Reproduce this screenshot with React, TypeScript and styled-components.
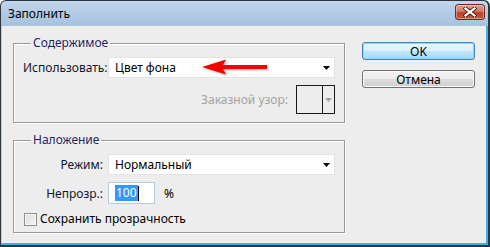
import styled, { createGlobalStyle } from "styled-components";

const GlobalStyle = createGlobalStyle`
  html, body {
    margin: 0;
    padding: 0;
    background: #ffffff;
  }
  body {
    font-family: "Noto Sans", "Open Sans", sans-serif;
    font-size: 12px;
    color: #000;
  }
`;

const Frame = styled.div`
  width: 490px;
  height: 247px;
  box-sizing: border-box;
  padding: 1px 2px 2px 1px;
  background: #2b3640;
  border-radius: 6px 6px 0 0;
  display: flex;
`;

const Inner = styled.div`
  flex: 1;
  display: flex;
  flex-direction: column;
  border-radius: 5px 5px 0 0;
  overflow: hidden;
`;

const TitleBar = styled.div`
  height: 25px;
  flex-shrink: 0;
  display: flex;
  align-items: center;
  justify-content: space-between;
  padding: 0 3px 0 7px;
  background: linear-gradient(#c4d7ec, #b3cbe5 45%, #a7c1de);
`;

const Title = styled.span`
  font-size: 12px;
  color: #000;
  margin-top: -1px;
`;

const CloseButton = styled.div`
  width: 30px;
  height: 16px;
  margin-top: -4px;
  box-sizing: border-box;
  border: 1px solid #6b2a22;
  border-radius: 3px;
  background: linear-gradient(#e0a193, #d07a66 45%, #c0402a 55%, #c95a3f);
  box-shadow: inset 0 0 0 1px rgba(255, 255, 255, 0.35);
  display: flex;
  align-items: center;
  justify-content: center;
`;

const Client = styled.div`
  flex: 1;
  display: flex;
  background: #ededed;
  border-left: 1px solid #b9cde3;
  border-right: 2px solid #3db1e2;
  border-bottom: 2px solid #3db1e2;
  padding: 9px 0 0 11px;
`;

const Groups = styled.div`
  width: 332px;
  display: flex;
  flex-direction: column;
  gap: 9px;
`;

const Group = styled.fieldset`
  margin: 0;
  padding: 0 9px ${(p: { $bottom: number }) => p.$bottom}px 9px;
  border: 1px solid #9a9a9a;
  box-shadow: 1px 1px 0 #ffffff, inset 1px 1px 0 #ffffff;
  min-inline-size: 0;
  display: flex;
  flex-direction: column;
  gap: 7px;
`;

const Legend = styled.legend`
  margin-left: 8px;
  padding: 0 2px;
  line-height: 16px;
  color: #1a2466;
  font-size: 12px;
`;

const Row = styled.div`
  display: grid;
  grid-template-columns: 80px 1fr;
  column-gap: 5px;
  align-items: center;
`;

const FirstRow = styled(Row)`
  margin-top: 6px;
`;

const Label = styled.span`
  text-align: right;
  white-space: nowrap;
  color: #111530;
`;

const Select = styled.div`
  position: relative;
  height: 21px;
  box-sizing: border-box;
  border: 1px solid #e2e2e2;
  background: #ffffff;
  display: flex;
  align-items: center;
  justify-content: space-between;
  padding: 0 4px 0 6px;
`;

const ValueText = styled.span`
  color: #000;
`;

const PointerArrow = styled.svg`
  position: absolute;
  left: 92px;
  top: 0px;
  filter: drop-shadow(1px 1px 1px rgba(0, 0, 0, 0.35));
`;

const PatternRow = styled.div`
  display: flex;
  align-items: center;
  justify-content: flex-end;
  gap: 8px;
`;

const DisabledLabel = styled.span`
  color: #a3a3a3;
`;

const PatternBox = styled.div`
  width: 39px;
  height: 29px;
  box-sizing: border-box;
  border: 1px solid #1a1a1a;
  display: flex;
`;

const Swatch = styled.div`
  flex: 1;
  border-right: 1px solid #1a1a1a;
`;

const PatternDrop = styled.div`
  width: 11px;
  display: flex;
  align-items: center;
  justify-content: center;
`;

const OpacityCell = styled.div`
  display: flex;
  align-items: center;
  gap: 9px;
`;

const NumberInput = styled.div`
  width: 47px;
  height: 22px;
  box-sizing: border-box;
  border: 1px solid #b9cbe0;
  background: #ffffff;
  display: flex;
  align-items: center;
  padding-left: 6px;
`;

const Selected = styled.span`
  background: #3399ff;
  color: #ffffff;
  line-height: 16px;
  padding: 0 1px;
`;

const Caret = styled.span`
  width: 1px;
  height: 15px;
  background: #000;
`;

const CheckRow = styled.label`
  display: flex;
  align-items: center;
  gap: 3px;
  margin-left: 1px;
  line-height: 16px;
`;

const CheckBox = styled.span`
  width: 13px;
  height: 13px;
  box-sizing: border-box;
  border: 1px solid #8e8f8f;
  background: linear-gradient(135deg, #dcdcdc, #f4f4f4);
  box-shadow: inset 0 0 0 1px #f6f6f6;
`;

const Buttons = styled.div`
  margin-left: 17px;
  padding-top: 7px;
  display: flex;
  flex-direction: column;
  gap: 10px;
`;

const Button = styled.div<{ $primary?: boolean }>`
  width: 113px;
  height: 18px;
  box-sizing: border-box;
  border: 1px solid ${(p) => (p.$primary ? "#3c88c2" : "#707070")};
  border-radius: 3px;
  background: ${(p) =>
    p.$primary
      ? "linear-gradient(#eaf6fd, #d9f0fc 50%, #bee6fd 51%, #a7d9f5)"
      : "linear-gradient(#f2f2f2, #ebebeb 50%, #dddddd 51%, #cfcfcf)"};
  box-shadow: inset 0 0 0 1px ${(p) => (p.$primary ? "#8fd3f5" : "#fcfcfc")};
  display: flex;
  align-items: center;
  justify-content: center;
  color: #000;
`;

function DownTriangle({ color }: { color: string }) {
  return (
    <svg width="7" height="4" viewBox="0 0 7 4">
      <path d="M0 0 H7 L3.5 4 Z" fill={color} />
    </svg>
  );
}

export default function App() {
  return (
    <>
      <GlobalStyle />
      <Frame>
        <Inner>
          <TitleBar>
            <Title>Заполнить</Title>
            <CloseButton>
              <svg width="14" height="10" viewBox="0 0 14 10">
                <path d="M2.5 1.5 L11.5 8.5 M11.5 1.5 L2.5 8.5" stroke="#4a1d16" strokeWidth="4" strokeLinecap="square" />
                <path d="M2.5 1.5 L11.5 8.5 M11.5 1.5 L2.5 8.5" stroke="#ffffff" strokeWidth="2.2" strokeLinecap="square" />
              </svg>
            </CloseButton>
          </TitleBar>
          <Client>
            <Groups>
              <Group $bottom={8}>
                <Legend>Содержимое</Legend>
                <FirstRow>
                  <Label>Использовать:</Label>
                  <Select>
                    <ValueText>Цвет фона</ValueText>
                    <DownTriangle color="#000" />
                    <PointerArrow width="68" height="18" viewBox="0 0 68 18">
                      <path d="M1 9 L25 1.5 L22 7 H66 V11 H22 L25 16.5 Z" fill="#f60000" />
                    </PointerArrow>
                  </Select>
                </FirstRow>
                <PatternRow>
                  <DisabledLabel>Заказной узор:</DisabledLabel>
                  <PatternBox>
                    <Swatch />
                    <PatternDrop>
                      <DownTriangle color="#a0a0a0" />
                    </PatternDrop>
                  </PatternBox>
                </PatternRow>
              </Group>
              <Group $bottom={5}>
                <Legend>Наложение</Legend>
                <FirstRow>
                  <Label>Режим:</Label>
                  <Select>
                    <ValueText>Нормальный</ValueText>
                    <DownTriangle color="#000" />
                  </Select>
                </FirstRow>
                <Row>
                  <Label>Непрозр.:</Label>
                  <OpacityCell>
                    <NumberInput>
                      <Selected>100</Selected>
                      <Caret />
                    </NumberInput>
                    <span>%</span>
                  </OpacityCell>
                </Row>
                <CheckRow>
                  <CheckBox />
                  <span>Сохранить прозрачность</span>
                </CheckRow>
              </Group>
            </Groups>
            <Buttons>
              <Button $primary>OK</Button>
              <Button>Отмена</Button>
            </Buttons>
          </Client>
        </Inner>
      </Frame>
    </>
  );
}
